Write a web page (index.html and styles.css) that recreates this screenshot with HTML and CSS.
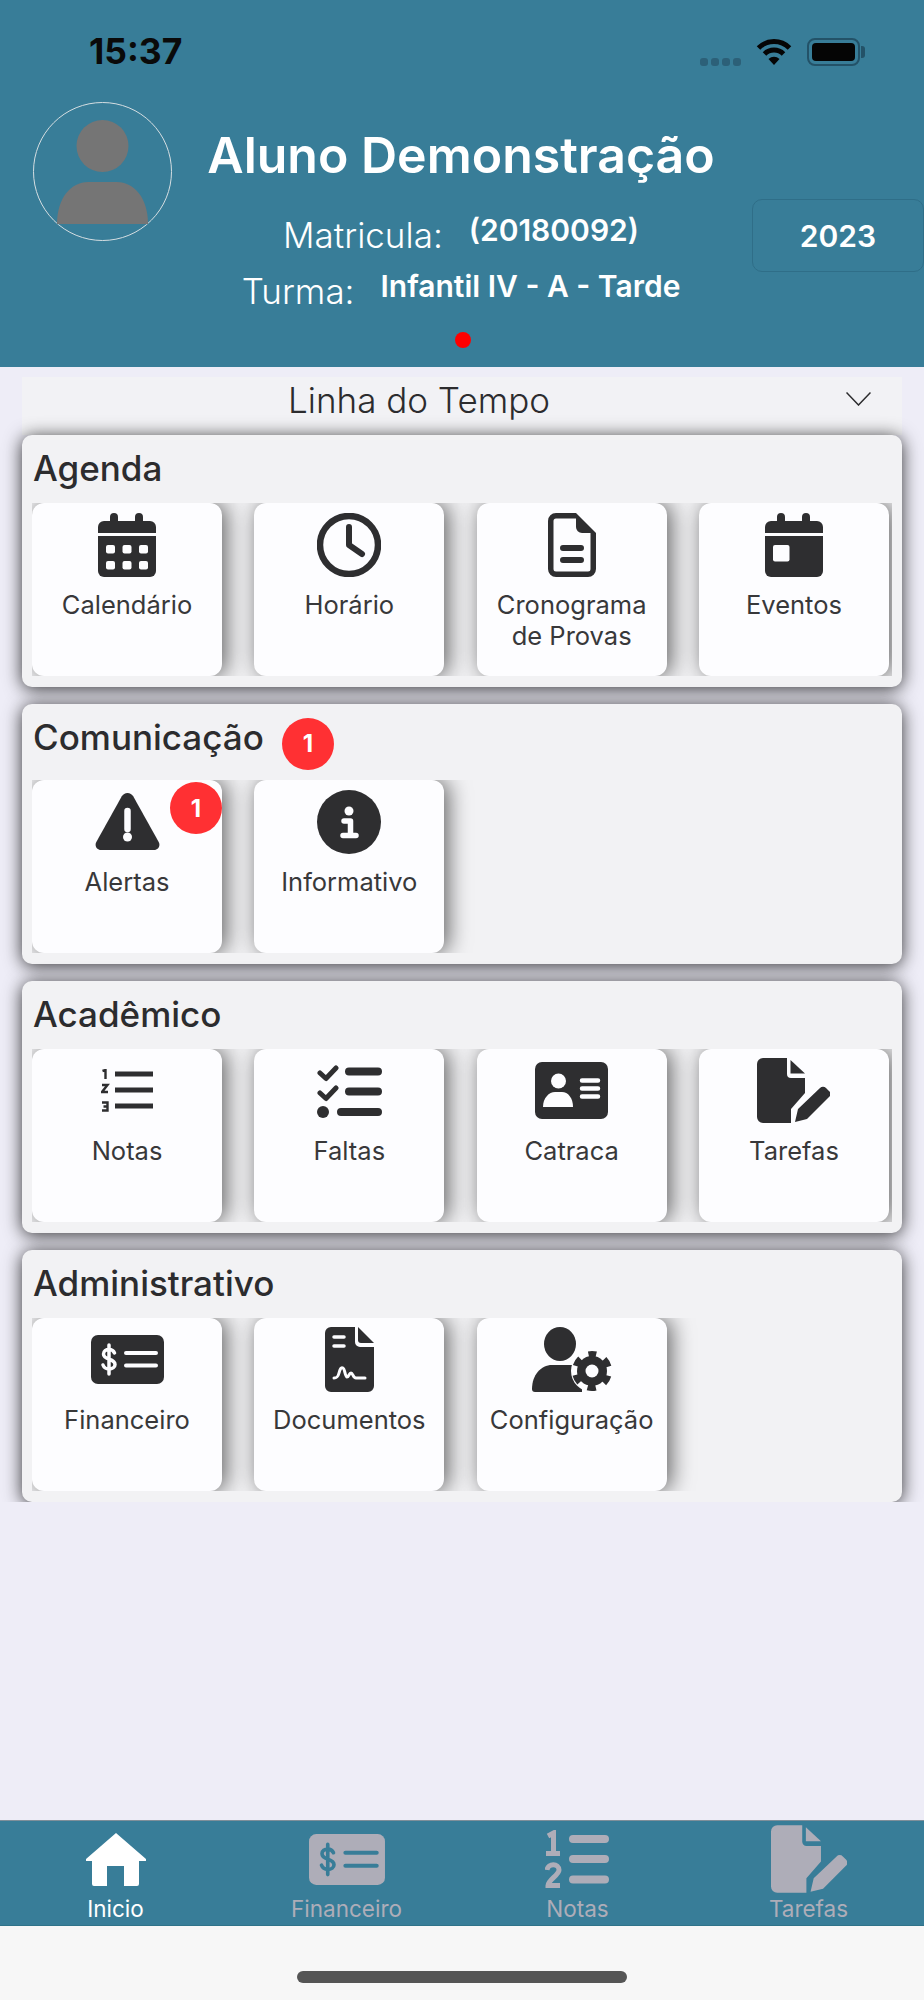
FILE: index.html
```html
<!DOCTYPE html>
<html lang="pt-BR">

<head>
    <meta charset="UTF-8">
    <meta name="viewport" content="width=device-width, initial-scale=1.0">
    <title>Aluno</title>
    <link rel="stylesheet" href="styles.css">
</head>

<body>

    <svg class="sprite" width="0" height="0">
        <symbol id="i-calendar" viewBox="0 0 58 64">
            <path d="M12 4a4 4 0 0 1 8 0v4h17V4a4 4 0 0 1 8 0v4h7a6 6 0 0 1 6 6v6H0v-6a6 6 0 0 1 6-6h6z" />
            <path d="M0 23h58v35a6 6 0 0 1-6 6H6a6 6 0 0 1-6-6z" />
            <rect class="hole-fill" x="8" y="32" width="9" height="8.5" rx="2" />
            <rect class="hole-fill" x="24.5" y="32" width="9" height="8.5" rx="2" />
            <rect class="hole-fill" x="41" y="32" width="9" height="8.5" rx="2" />
            <rect class="hole-fill" x="8" y="48" width="9" height="8.5" rx="2" />
            <rect class="hole-fill" x="24.5" y="48" width="9" height="8.5" rx="2" />
            <rect class="hole-fill" x="41" y="48" width="9" height="8.5" rx="2" />
        </symbol>
        <symbol id="i-clock" viewBox="0 0 64 64">
            <circle cx="32" cy="32" r="29" fill="none" stroke="currentColor" stroke-width="6.5" />
            <path d="M32 14v18l13 9" fill="none" stroke="currentColor" stroke-width="6" stroke-linecap="round" stroke-linejoin="round" />
        </symbol>
        <symbol id="i-file" viewBox="0 0 48 64">
            <path fill-rule="evenodd" d="M8 0h20l20 20v36a8 8 0 0 1-8 8H8a8 8 0 0 1-8-8V8a8 8 0 0 1 8-8zM8 5.5a2.5 2.5 0 0 0-2.5 2.5v48a2.5 2.5 0 0 0 2.5 2.5h32a2.5 2.5 0 0 0 2.5-2.5V20H34a6 6 0 0 1-6-6V5.5z" />
            <path d="M15 35h18M15 47h18" fill="none" stroke="currentColor" stroke-width="6" stroke-linecap="round" />
        </symbol>
        <symbol id="i-event" viewBox="0 0 58 64">
            <path d="M12 4a4 4 0 0 1 8 0v4h17V4a4 4 0 0 1 8 0v4h7a6 6 0 0 1 6 6v6H0v-6a6 6 0 0 1 6-6h6z" />
            <path d="M0 23h58v35a6 6 0 0 1-6 6H6a6 6 0 0 1-6-6z" />
            <rect class="hole-fill" x="8" y="32" width="16.5" height="16.5" rx="2" />
        </symbol>
        <symbol id="i-alert" viewBox="0 0 65 57">
            <path d="M32.5 0c2.5 0 4.5 1.3 5.7 3.3L63.7 49c2 3.7-.5 8-4.7 8H6c-4.2 0-6.7-4.3-4.7-8L26.8 3.3C28 1.3 30 0 32.5 0z" />
            <path class="hole" d="M32.5 18v18" stroke-width="6.5" stroke-linecap="round" />
            <circle class="hole-fill" cx="32.5" cy="44" r="4.5" />
        </symbol>
        <symbol id="i-info" viewBox="0 0 64 64">
            <circle cx="32" cy="32" r="32" />
            <circle class="hole-fill" cx="32" cy="21" r="4.5" />
            <path class="hole" d="M27 31h6.5v14M26 45.5h13" stroke-width="5.5" stroke-linecap="round" stroke-linejoin="round" />
        </symbol>
        <symbol id="i-grades" viewBox="0 0 52 43">
            <path d="M14 2.5h38v5H14zM14 18.5h38v5H14zM14 34.5h38v5H14z" />
            <path d="M1.5 2l3-1v9M1 16h5.5L1 23h6M1 33.5h5.5v8H1M2.5 37.5h4" fill="none" stroke="currentColor" stroke-width="2.4" />
        </symbol>
        <symbol id="i-checks" viewBox="0 0 65 54">
            <path d="M3 9l6 5.5L19 4M3 29l6 5.5L19 24" fill="none" stroke="currentColor" stroke-width="5" stroke-linecap="round" stroke-linejoin="round" />
            <path d="M32 7.5h29M32 27.5h29M24 48h37" fill="none" stroke="currentColor" stroke-width="8" stroke-linecap="round" />
            <circle cx="6" cy="48" r="6" />
        </symbol>
        <symbol id="i-card" viewBox="0 0 73 57">
            <rect width="73" height="57" rx="7" />
            <circle class="hole-fill" cx="23.5" cy="19" r="7.5" />
            <path class="hole-fill" d="M8 45c0-9 6-15 12-15h7c6 0 11 6 11 15z" />
            <path class="hole" d="M47 18.5h16M47 26.5h16M47 34.5h16" stroke-width="4.5" stroke-linecap="round" />
        </symbol>
        <symbol id="i-task" viewBox="0 0 73 65">
            <path d="M6 0h24v16a4 4 0 0 0 4 4h14v15L34 51v14H6a6 6 0 0 1-6-6V6a6 6 0 0 1 6-6z" />
            <path d="M33.5 2L48 15.5H33.500z" />
            <path d="M38 64l3-13 22-21a4 4 0 0 1 6 0l3 3a4 4 0 0 1 0 6L50 61z" />
        </symbol>
        <symbol id="i-money" viewBox="0 0 73 49">
            <rect width="73" height="49" rx="7" />
            <path class="hole" d="M35 18h30M35 30.5h30" stroke-width="4" stroke-linecap="round" />
            <path class="hole" d="M23.5 18c-1-2.500-3-3.500-5.500-3.500-3 0-5.500 1.500-5.500 4.500 0 6.500 11.500 4 11.500 10.500 0 2.500-2.500 4.500-6 4.500-2.800 0-5-1.300-6-4M18 10v29" stroke-width="3.5" stroke-linecap="round" />
        </symbol>
        <symbol id="i-doc" viewBox="0 0 49 65">
            <path d="M6 0h24v15a5 5 0 0 0 5 5h14v39a6 6 0 0 1-6 6H6a6 6 0 0 1-6-6V6a6 6 0 0 1 6-6z" />
            <path d="M33 0l16 16H36a3 3 0 0 1-3-3z" />
            <path class="hole" d="M9 10h10M9 19h10" stroke-width="3.5" stroke-linecap="round" />
            <path class="hole" d="M9 51c3 0 4-1 5-5s2-6 4-5 2 9 4 9 2-4 4-4 2 5 5 5h9" stroke-width="3" stroke-linecap="round" stroke-linejoin="round" />
        </symbol>
        <symbol id="i-user-gear" viewBox="0 0 80 65">
            <ellipse cx="28" cy="17" rx="16" ry="17" />
            <path d="M3 65a3 3 0 0 1-3-3C0 48 9 38 20 38h18c8 0 12 8 12 27z" />
            <circle class="hole-fill" cx="60" cy="44" r="21" />
            <circle cx="60" cy="44" r="15" />
            <circle cx="60" cy="44" r="17" fill="none" stroke="currentColor" stroke-width="6" stroke-dasharray="8.5 9.3" stroke-dashoffset="4.25" transform="rotate(-90 60 44)" />
            <circle class="hole-fill" cx="60" cy="44" r="6.5" />
        </symbol>
        <symbol id="i-home" viewBox="0 0 60 53">
            <path d="M30 0l30 26v2h-7v23a2 2 0 0 1-2 2H38V33H21v20H8a2 2 0 0 1-2-2V28H0v-2z" />
        </symbol>
        <symbol id="i-grades-tab" viewBox="0 0 65 58">
            <path d="M28 9h32M28 29h32M28 49.5h32" fill="none" stroke="currentColor" stroke-width="8" stroke-linecap="round" />
            <path d="M3 6l5.5-3v20M1 23.5h14M2 40c1-7 12-7 12 0 0 5-11 10-11 15.5h12" fill="none" stroke="currentColor" stroke-width="5" />
        </symbol>
    </svg>

    <header class="top">
        <div class="status">
            <span class="time">15:37</span>
            <div class="status-icons">
                <span class="signal"><i></i><i></i><i></i><i></i></span>
                <svg class="wifi" width="36" height="27" viewBox="0 0 36 27">
                    <path d="M2.5 10a22 22 0 0 1 31 0M8.5 16a13.5 13.5 0 0 1 19 0" fill="none" stroke="#050505" stroke-width="5" />
                    <path d="M12.5 21a8 8 0 0 1 11 0L18 27z" fill="#050505" />
                </svg>
                <span class="battery"><i></i></span>
            </div>
        </div>

        <div class="student">
            <div class="avatar">
                <svg width="91" height="104" viewBox="0 0 91 104">
                    <ellipse cx="45.5" cy="26" rx="26" ry="26" fill="#757575" />
                    <path d="M0 104c0-26 14-42 31-42h29c17 0 31 16 31 42z" fill="#757575" />
                </svg>
            </div>
            <div class="info">
                <h1>Aluno Demonstração</h1>
                <div class="info-row row-id">
                    <span class="info-label">Matricula:</span>
                    <span class="info-value">(20180092)</span>
                </div>
                <div class="info-row row-class">
                    <span class="info-label">Turma:</span>
                    <span class="info-value">Infantil IV - A - Tarde</span>
                </div>
                <span class="pager-dot"></span>
            </div>
            <div class="year">2023</div>
        </div>
    </header>

    <main class="content">
        <div class="scroll">
            <div class="select">
                <span>Linha do Tempo</span>
                <svg class="chevron" width="25" height="14" viewBox="0 0 25 14">
                    <path d="M.5.5l12 12.5 12-12.5" fill="none" stroke="#2c2c2e" stroke-width="1.5" />
                </svg>
            </div>

            <section class="group">
                <h2>Agenda</h2>
                <div class="tiles">
                    <a class="tile"><span class="tile-icon"><svg width="58" height="64"><use href="#i-calendar" /></svg></span><span class="tile-label">Calendário</span></a>
                    <a class="tile"><span class="tile-icon"><svg width="64" height="64"><use href="#i-clock" /></svg></span><span class="tile-label">Horário</span></a>
                    <a class="tile"><span class="tile-icon"><svg width="48" height="64"><use href="#i-file" /></svg></span><span class="tile-label">Cronograma de Provas</span></a>
                    <a class="tile"><span class="tile-icon"><svg width="58" height="64"><use href="#i-event" /></svg></span><span class="tile-label">Eventos</span></a>
                </div>
            </section>

            <section class="group">
                <h2 class="with-badge">Comunicação <span class="badge">1</span></h2>
                <div class="tiles">
                    <a class="tile"><span class="tile-icon"><svg width="65" height="57"><use href="#i-alert" /></svg></span><span class="tile-label">Alertas</span><span class="badge tile-badge">1</span></a>
                    <a class="tile"><span class="tile-icon"><svg width="64" height="64"><use href="#i-info" /></svg></span><span class="tile-label">Informativo</span></a>
                </div>
            </section>

            <section class="group">
                <h2>Acadêmico</h2>
                <div class="tiles">
                    <a class="tile"><span class="tile-icon"><svg width="52" height="43"><use href="#i-grades" /></svg></span><span class="tile-label">Notas</span></a>
                    <a class="tile"><span class="tile-icon"><svg width="65" height="54"><use href="#i-checks" /></svg></span><span class="tile-label">Faltas</span></a>
                    <a class="tile"><span class="tile-icon"><svg width="73" height="57"><use href="#i-card" /></svg></span><span class="tile-label">Catraca</span></a>
                    <a class="tile"><span class="tile-icon"><svg width="73" height="65"><use href="#i-task" /></svg></span><span class="tile-label">Tarefas</span></a>
                </div>
            </section>

            <section class="group">
                <h2>Administrativo</h2>
                <div class="tiles">
                    <a class="tile"><span class="tile-icon"><svg width="73" height="49"><use href="#i-money" /></svg></span><span class="tile-label">Financeiro</span></a>
                    <a class="tile"><span class="tile-icon"><svg width="49" height="65"><use href="#i-doc" /></svg></span><span class="tile-label">Documentos</span></a>
                    <a class="tile"><span class="tile-icon"><svg width="80" height="65"><use href="#i-user-gear" /></svg></span><span class="tile-label">Configuração</span></a>
                </div>
            </section>
        </div>
    </main>

    <nav class="tabs">
        <a class="tab active"><span class="tab-icon"><svg width="60" height="53"><use href="#i-home" /></svg></span>Inicio</a>
        <a class="tab"><span class="tab-icon"><svg width="76" height="51"><use href="#i-money" /></svg></span>Financeiro</a>
        <a class="tab"><span class="tab-icon"><svg width="65" height="58"><use href="#i-grades-tab" /></svg></span>Notas</a>
        <a class="tab"><span class="tab-icon"><svg width="76" height="68"><use href="#i-task" /></svg></span>Tarefas</a>
    </nav>

    <div class="home-area">
        <span class="home-bar"></span>
    </div>

</body>

</html>
```

FILE: styles.css
```css
* {
    box-sizing: border-box;
}

body {
    margin: 0;
    height: 100vh;
    display: flex;
    flex-direction: column;
    font-family: Inter, "Liberation Sans", sans-serif;
    background-color: #EEEDF7;
    color: #2C2C2E;
}

.sprite {
    position: absolute;
}

.hole {
    fill: none;
    stroke: var(--hole);
}

.hole-fill {
    fill: var(--hole);
}

svg {
    display: block;
    fill: currentColor;
}

/* header */

.top {
    height: 367px;
    background-color: #387D98;
    color: #FFFFFF;
}

.status {
    height: 102px;
    padding: 31px 64px 0 89px;
    display: flex;
    justify-content: space-between;
}

.time {
    font-size: 35.5px;
    font-weight: 700;
    line-height: 42px;
    color: #0A0A0A;
}

.status-icons {
    display: flex;
    align-items: flex-start;
    padding-top: 7px;
}

.signal {
    display: flex;
    gap: 3px;
    margin-top: 20px;
    margin-right: 15px;
}

.signal i {
    width: 8px;
    height: 8px;
    border-radius: 3px;
    background-color: #2C6078;
}

.battery {
    width: 53px;
    height: 28px;
    margin-left: 15px;
    padding: 3px;
    border: 2px solid #235268;
    border-radius: 8px;
    position: relative;
}

.battery i {
    display: block;
    height: 100%;
    border-radius: 4px;
    background-color: #050505;
}

.battery::after {
    content: "";
    position: absolute;
    right: -7px;
    top: 6px;
    width: 4px;
    height: 12px;
    border-radius: 0 3px 3px 0;
    background-color: #235268;
}

.student {
    display: flex;
    align-items: flex-start;
    padding-left: 33px;
}

.avatar {
    width: 139px;
    height: 139px;
    flex-shrink: 0;
    padding-top: 17px;
    border: 1px solid #D5DEE2;
    border-radius: 50%;
    display: flex;
    justify-content: center;
}

.info {
    width: 512px;
    margin-left: 33px;
    display: flex;
    flex-direction: column;
    align-items: center;
}

.info h1 {
    margin: 23px 0 0;
    font-size: 50px;
    font-weight: 600;
    line-height: 60px;
    white-space: nowrap;
}

.info-row {
    display: flex;
    gap: 26px;
    white-space: nowrap;
}

.row-id {
    margin-top: 30px;
}

.row-class {
    margin-top: 16px;
}

.info-label {
    font-size: 35px;
    font-weight: 300;
    line-height: 40px;
}

.info-value {
    margin-top: -1px;
    font-size: 30px;
    font-weight: 600;
    line-height: 32px;
}

.pager-dot {
    width: 16px;
    height: 16px;
    margin-top: 21px;
    margin-left: 4px;
    border-radius: 50%;
    background-color: #FF0000;
}

.year {
    width: 172px;
    height: 73px;
    margin-top: 97px;
    margin-left: 35px;
    border: 1px solid #2F6E88;
    border-radius: 10px;
    display: flex;
    align-items: center;
    justify-content: center;
    font-size: 30px;
    font-weight: 600;
}

/* lista */

.content {
    flex: 1;
    min-height: 0;
}

.scroll {
    padding: 10px 22px 0;
    overflow: hidden;
}

.select {
    height: 58px;
    padding: 2px 31px 0 0;
    background-color: #F2F2F5;
    display: flex;
    align-items: flex-start;
    font-size: 35px;
    font-weight: 300;
    line-height: 42px;
}

.select span {
    margin-left: 266px;
}

.chevron {
    margin-left: auto;
    margin-top: 13px;
}

.group {
    padding: 0 10px 11px 10px;
    margin-bottom: 17px;
    border-radius: 10px;
    background-color: #F2F2F4;
    box-shadow: 0 2px 18px rgba(0, 0, 0, 0.8);
}

.group:last-child {
    margin-bottom: 0;
}

.group h2 {
    margin: 0;
    height: 68px;
    padding-left: 1px;
    padding-top: 12px;
    font-size: 35px;
    font-weight: 500;
    line-height: 42px;
}

.group h2.with-badge {
    height: 76px;
    display: flex;
    gap: 18px;
}

.badge {
    width: 52px;
    height: 52px;
    border-radius: 50%;
    background-color: #FF3033;
    color: #FFFFFF;
    font-size: 24px;
    font-weight: 700;
    display: flex;
    align-items: center;
    justify-content: center;
}

.with-badge .badge {
    margin-top: 2px;
}

.tile-badge {
    position: absolute;
    top: 2px;
    right: 0;
}

.tiles {
    display: flex;
    gap: 32.33px;
    height: 173px;
    overflow: hidden;
}

.tile {
    position: relative;
    width: 190px;
    height: 173px;
    flex-shrink: 0;
    padding: 9px 8px 0;
    border-radius: 12px;
    background-color: #FDFDFF;
    box-shadow: 4px 0 22px rgba(0, 0, 0, 0.6);
    --hole: #FDFDFF;
    color: #2E2E30;
    display: flex;
    flex-direction: column;
    align-items: center;
}

.tile-icon {
    height: 65px;
    flex-shrink: 0;
    display: flex;
    align-items: center;
    justify-content: center;
}

.tile-label {
    margin-top: 12px;
    font-size: 25.5px;
    line-height: 31px;
    text-align: center;
    color: #38383A;
}

/* tab bar */

.tabs {
    height: 106px;
    background-color: #387D98;
    border-top: 1px solid #7F8F9A;
    border-bottom: 1px solid #2F7389;
    --hole: #387D98;
    display: flex;
}

.tab {
    flex: 1;
    display: flex;
    flex-direction: column;
    align-items: center;
    font-size: 22.5px;
    line-height: 24px;
    color: #AEADB8;
}

.tab.active {
    color: #FFFFFF;
}

.tab-icon {
    height: 76px;
    display: flex;
    align-items: center;
    justify-content: center;
}

.home-area {
    height: 74px;
    background-color: #F7F7F7;
    display: flex;
    justify-content: center;
    padding-top: 45px;
}

.home-bar {
    width: 330px;
    height: 12px;
    border-radius: 6px;
    background-color: #555555;
}
```
